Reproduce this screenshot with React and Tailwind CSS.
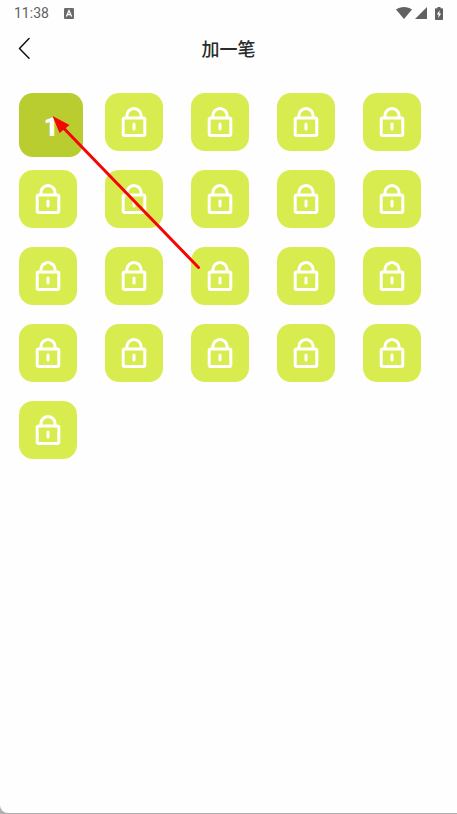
const LEVEL_COUNT = 21;

function StatusBar() {
  return (
    <div className="flex h-6 items-center pt-0.5 pr-3 pl-3.5 text-[#616161]">
      <span className="font-[Roboto,sans-serif] text-[14px] leading-5">11:38</span>
      <svg className="ml-[15px] h-[11px] w-[10px]" viewBox="0 0 10 11" aria-hidden="true">
        <rect width="10" height="11" rx="1.2" fill="#6a6a6a" />
        <path d="M2.4 8.4 5 2.6l2.6 5.8M3.4 6.6h3.2" fill="none" stroke="#fff" strokeWidth="1.3" />
      </svg>
      <div className="ml-auto flex items-center">
        <svg className="h-3 w-4" viewBox="0 0 16 12" aria-hidden="true">
          <path d="M8 12 0 2.6C2.2.9 5 0 8 0s5.8.9 8 2.6z" fill="currentColor" />
        </svg>
        <svg className="ml-[3px] size-3" viewBox="0 0 12 12" aria-hidden="true">
          <path d="M12 0v12H0z" fill="currentColor" />
        </svg>
        <svg className="mr-0.5 ml-2 h-[13px] w-[8px]" viewBox="0 0 8 13" aria-hidden="true">
          <path
            d="M2.5 0h3v1.2H7.2q.8 0 .8.8v10.2q0 .8-.8.8H.8Q0 13 0 12.2V2q0-.8.8-.8h1.7z"
            fill="currentColor"
          />
          <path d="M4.6 3.2 1.8 7.6h1.8L3.2 11l3-4.6H4.4z" fill="#fff" />
        </svg>
      </div>
    </div>
  );
}

function Header() {
  return (
    <header className="grid h-12 grid-cols-[1fr_auto_1fr] items-center px-[18px]">
      <button type="button" aria-label="返回" className="justify-self-start">
        <svg className="h-[22px] w-3" viewBox="0 0 12 22" aria-hidden="true">
          <path
            d="M11 1.6 1.5 11.4 11 21.200"
            fill="none"
            stroke="#111"
            strokeWidth="1.5"
            strokeLinecap="round"
            strokeLinejoin="round"
          />
        </svg>
      </button>
      <h1 className="font-['Noto_Sans_CJK_SC',sans-serif] text-[18px] leading-6 font-medium text-[#2b2b2b]">
        加一笔
      </h1>
    </header>
  );
}

function LockIcon() {
  return (
    <svg className="h-[30px] w-[26px]" viewBox="0 0 26 30" fill="none" stroke="#fff" aria-hidden="true">
      <rect x="2.2" y="11" width="21.6" height="17.5" rx="1.5" strokeWidth="3" />
      <path d="M5.9 11V8.6a7.1 7.1 0 0 1 14.2 0V11" strokeWidth="3" />
      <path d="M13 17v5" strokeWidth="3" strokeLinecap="round" />
    </svg>
  );
}

function LevelTile({ level }) {
  if (level === 1) {
    return (
      <button
        type="button"
        className="flex size-16 items-center justify-center rounded-[14px] bg-[#b9cc30] pt-1 font-[Roboto,sans-serif] text-[26px] leading-8 font-black text-white"
      >
        1
      </button>
    );
  }
  return (
    <button
      type="button"
      disabled
      aria-label={`第${level}关`}
      className="flex size-[58px] items-center justify-center rounded-[14px] bg-[#d9ec4f]"
    >
      <LockIcon />
    </button>
  );
}

function HintArrow() {
  return (
    <svg
      className="pointer-events-none absolute top-11 left-[52px] h-[156px] w-[150px]"
      viewBox="0 0 150 156"
      aria-hidden="true"
    >
      <path d="M146.5 151.5 12 12.5" stroke="#f60505" strokeWidth="3" strokeLinecap="round" />
      <path d="M0.5 0 17.5 9 7.5 17z" fill="#f60505" />
    </svg>
  );
}

export default function App() {
  return (
    <div className="min-h-screen bg-[#b0b0b0] pb-px">
      <div className="flex min-h-[calc(100vh-1px)] flex-col rounded-bl-lg bg-[#fefefe]">
        <StatusBar />
        <Header />
        <main className="relative pt-[21px] pr-2 pl-[19px]">
          <div className="grid auto-rows-[58px] grid-cols-5 items-start justify-items-start gap-y-[19px]">
            {Array.from({ length: LEVEL_COUNT }, (_, i) => (
              <LevelTile key={i} level={i + 1} />
            ))}
          </div>
          <HintArrow />
        </main>
      </div>
    </div>
  );
}
